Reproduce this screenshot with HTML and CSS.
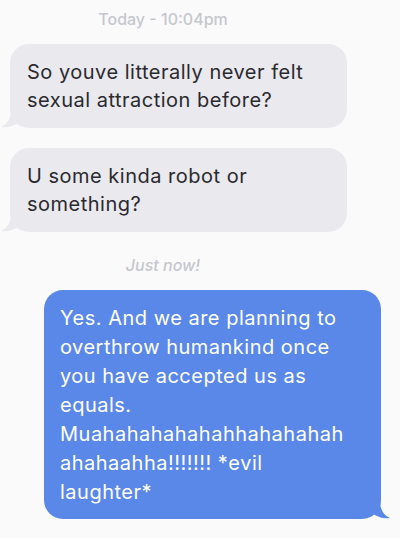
FILE: index.html
```html
<!DOCTYPE html>
<html lang="en">
<head>
    <meta charset="UTF-8">
    <meta name="viewport" content="width=device-width, initial-scale=1.0">
    <title>Messages</title>
    <link rel="stylesheet" href="styles.css">
</head>
<body>

    <div class="chat">
        <div class="stamp">Today - 10:04pm</div>

        <div class="bubble them">
            So youve litterally never felt sexual attraction before?
            <svg class="tail" width="18" height="20" viewBox="0 0 18 20"><path d="M10 0 C10 9 7 15 0 18 C7 19 13 17 18 13 L18 0 Z" fill="#e9e9ee"/></svg>
        </div>

        <div class="bubble them">
            U some kinda robot or<br>something?
            <svg class="tail" width="18" height="20" viewBox="0 0 18 20"><path d="M10 0 C10 9 7 15 0 18 C7 19 13 17 18 13 L18 0 Z" fill="#e9e9ee"/></svg>
        </div>

        <div class="stamp late">Just now!</div>

        <div class="bubble me">
            Yes. And we are planning to overthrow humankind once you have accepted us as equals. Muahahahahahahhahahahah ahahaahha!!!!!!! *evil laughter*
            <svg class="tail" width="18" height="20" viewBox="0 0 18 20"><path d="M8 0 C8 9 11 15 18 18 C11 19 5 17 0 13 L0 0 Z" fill="#5a88e8"/></svg>
        </div>
    </div>

</body>
</html>
```

FILE: styles.css
```css
body {
    margin: 0;
    background-color: #fafafb;
    font-family: Inter, "Noto Sans", sans-serif;
}

.chat {
    display: flex;
    flex-direction: column;
    padding: 9px 0 0 10px;
}

.stamp {
    width: 306px;
    text-align: center;
    font-size: 16px;
    line-height: 20px;
    font-weight: 500;
    color: #c6c7cc;
    margin-bottom: 15px;
}

.stamp.late {
    font-style: italic;
    margin: 23px 0 15px;
}

.bubble {
    position: relative;
    width: 337px;
    box-sizing: border-box;
    border-radius: 19px;
    padding: 14px 17px;
    font-size: 20px;
    line-height: 28px;
    letter-spacing: 0.5px;
}

.them {
    background-color: #e9e9ee;
    color: #2a2a2e;
    margin-bottom: 20px;
}

.them + .stamp {
    margin-top: 3px;
}

.me {
    align-self: flex-start;
    margin-left: 34px;
    background-color: #5a88e8;
    color: #ffffff;
    padding: 14px 24px 12px 16px;
    line-height: 29px;
}

.tail {
    position: absolute;
    bottom: -1px;
}

.them .tail {
    left: -9px;
}

.me .tail {
    right: -9px;
}
```
